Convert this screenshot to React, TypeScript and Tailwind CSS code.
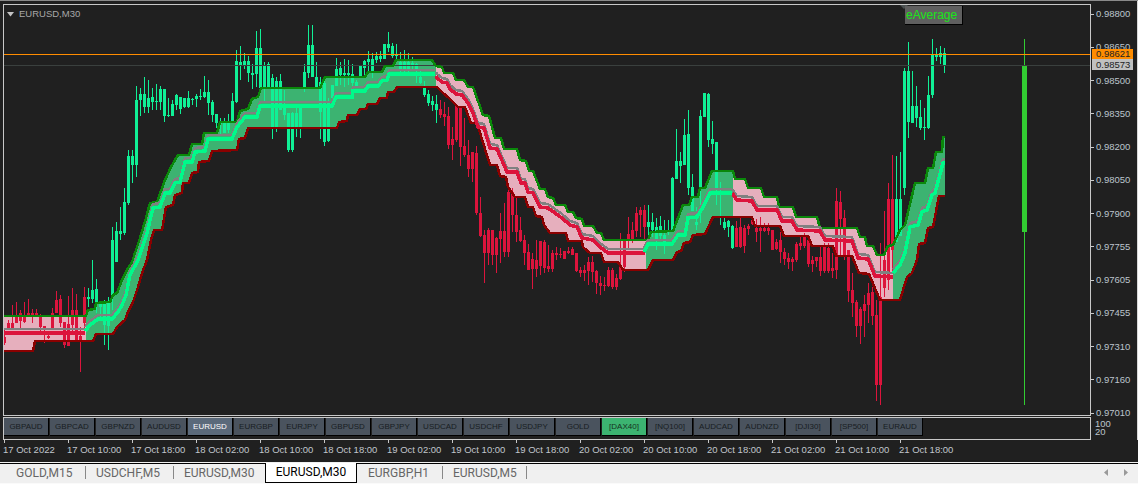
const BARS: number[][] = [
  [4,330,345,337,343],[8,320,330,323,328],[12,305,328,323,328],[16,302,323,317,323],[20,310,330,313,321],[24,302,323,317,322],[28,299,317,313,316],[32,309,323,313,317],[36,309,317,313,315],[40,314,331,317,327],
  [44,326,343,326,330],[48,335,339,336,338],[52,308,330,313,330],[56,291,313,300,313],[60,295,327,299,323],[64,322,348,322,345],[68,296,346,324,346],[72,288,335,310,325],[76,294,342,310,342],[80,327,372,336,342],
  [84,287,335,297,323],[88,288,307,297,299],[92,260,303,290,299],[96,279,313,289,302],[100,302,317,303,307],[104,300,345,303,325],[108,297,350,302,326],[112,227,310,240,295],[116,222,260,231,262],[120,207,240,231,234],
  [124,188,235,202,233],[128,150,205,156,203],[132,150,183,156,165],[136,86,177,100,165],[140,88,116,94,100],[144,77,113,94,107],[148,80,113,98,107],[152,88,110,97,102],[156,84,110,101,102],[160,86,110,89,102],
  [164,89,122,89,116],[168,98,117,115,116],[172,100,116,104,116],[176,94,110,95,105],[180,97,114,97,109],[184,98,108,98,107],[188,91,108,98,107],[192,98,105,99,100],[196,94,107,96,99],[200,89,100,96,97],
  [204,76,98,92,97],[208,80,115,92,103],[212,100,122,102,115],[216,115,128,114,123],[220,118,135,123,124],[224,118,132,123,133],[228,114,133,123,130],[232,93,122,101,122],[236,50,103,61,102],[240,46,80,62,66],
  [244,53,69,61,65],[248,56,82,61,73],[252,64,89,73,75],[256,31,87,48,74],[260,29,88,48,88],[264,62,102,65,88],[268,62,88,64,87],[272,74,139,78,128],[276,77,132,81,128],[280,74,103,81,110],
  [284,90,120,108,115],[288,113,152,113,150],[292,112,152,113,150],[296,107,137,113,127],[300,107,138,108,127],[304,64,92,72,88],[308,25,78,45,73],[312,25,77,45,77],[316,62,88,77,87],[320,77,139,82,112],
  [324,77,146,83,142],[328,98,142,102,141],[332,85,103,85,98],[336,58,85,69,86],[340,62,85,68,75],[344,59,87,73,75],[348,60,85,73,75],[352,64,88,74,83],[356,80,88,82,88],[360,65,76,66,76],
  [364,60,76,61,68],[368,51,72,59,62],[372,53,78,59,72],[376,52,63,56,60],[380,51,62,56,59],[384,44,59,44,59],[388,32,52,44,48],[392,43,58,46,56],[396,44,60,54,56],[400,52,72,62,70],
  [404,50,72,62,70],[408,53,72,62,70],[412,57,70,63,65],[416,63,83,64,71],[420,70,84,77,83],[424,81,97,88,95],[428,90,106,94,103],[432,96,111,101,105],[436,95,123,104,110],[440,100,118,109,115],
  [444,102,126,114,117],[448,107,149,116,145],[452,127,160,139,145],[456,105,142,106,140],[460,107,166,107,147],[464,118,157,146,155],[468,140,177,155,169],[472,152,182,152,169],[476,146,215,153,213],[480,197,237,213,236],
  [484,230,283,235,253],[488,228,265,230,253],[492,230,265,230,255],[496,237,273,238,255],[500,213,263,231,239],[504,203,257,231,252],[508,189,257,192,252],[512,188,232,192,215],[516,197,242,215,232],[520,217,242,230,241],
  [524,235,265,240,253],[528,244,270,252,270],[532,253,289,259,269],[536,240,277,260,269],[540,241,275,241,266],[544,240,273,242,268],[548,245,272,266,269],[552,250,272,253,269],[556,247,260,253,255],[560,248,258,254,255],
  [564,251,259,251,259],[568,247,254,251,253],[572,247,255,249,255],[576,253,272,253,271],[580,267,277,270,273],[584,265,281,270,273],[588,257,285,262,271],[592,256,282,262,272],[596,270,294,271,283],[600,276,295,283,286],
  [604,277,291,285,286],[608,267,287,270,286],[612,268,289,270,287],[616,274,290,278,287],[620,233,280,265,279],[624,240,272,241,267],[628,217,250,234,240],[632,222,243,230,239],[636,207,237,213,231],[640,207,237,210,215],
  [644,205,240,210,227],[648,205,235,222,227],[652,213,237,222,230],[656,218,250,227,240],[660,216,240,226,236],[664,220,254,235,243],[668,220,235,230,232],[672,177,230,178,230],[676,129,173,161,179],[680,152,183,161,166],
  [684,119,165,135,165],[688,110,195,134,188],[692,174,211,187,211],[696,207,230,222,225],[700,110,223,116,188],[704,93,117,93,117],[708,93,147,94,140],[712,121,154,139,144],[716,142,205,142,190],[720,182,225,188,190],
  [724,218,230,222,228],[728,220,237,221,227],[732,225,249,226,248],[736,221,247,228,247],[740,218,248,227,247],[744,225,253,228,246],[748,224,235,226,229],[752,220,225,220,224],[756,219,242,228,232],[760,217,252,228,231],
  [764,223,232,228,231],[768,223,235,228,231],[772,230,250,230,250],[776,239,250,242,249],[780,232,263,240,252],[784,248,265,252,259],[788,253,269,258,262],[792,257,271,259,262],[796,242,262,244,260],[800,235,250,243,246],
  [804,233,248,237,246],[808,240,267,240,264],[812,256,272,260,264],[816,257,267,257,261],[820,245,276,257,271],[824,243,273,245,271],[828,243,273,248,271],[832,253,278,268,271],[836,188,279,201,270],[840,191,255,202,219],
  [844,210,260,218,255],[848,250,302,250,291],[852,273,317,290,303],[856,300,337,302,326],[860,307,344,309,326],[864,295,337,304,311],[868,283,323,293,305],[872,287,325,292,316],[876,300,401,315,385],[880,243,405,297,385],
  [884,211,297,260,288],[888,183,290,199,280],[892,155,272,199,250],[896,156,227,199,242],[900,152,236,199,236],[904,68,195,71,188],[908,42,138,71,122],[912,71,123,106,123],[916,86,127,106,118],[920,100,130,117,128],
  [924,108,140,127,128],[928,76,129,95,128],[932,39,98,54,95],[936,48,61,54,57],[940,46,64,53,57],[944,48,73,53,66],
];

const UPPER = "4,316 86,316 88,310 95,309 96,303 110,302 113,295 117,293 122,280 127,270 132,262 136,250 140,238 146,218 150,203 157,202 165,180 171,167 178,155 189,155 192,144 202,144 204,133 217,133 220,122 237,122 240,111 248,109 252,99 258,97 261,88 320,88 325,77 365,77 368,72 382,72 385,66 393,66 396,60 432,60 436,66 442,67 444,73 453,73 456,80 464,80 468,87 473,87 483,115 489,116 495,138 501,138 504,149 517,149 520,160 526,161 529,171 533,171 540,189 545,189 548,197 553,198 556,205 565,205 568,212 573,212 576,218 582,219 584,226 593,226 597,233 601,233 604,240 648,240 651,232 673,231 683,205 689,205 692,197 698,197 700,188 705,188 712,171 733,171 735,179 745,179 748,188 761,188 764,197 777,197 779,207 793,207 796,217 817,217 820,228 857,228 860,237 865,237 867,246 873,246 877,255 884,255 888,246 893,245 900,230 905,225 915,183 925,183 928,168 933,168 936,152 942,152 943,137 945,137";
const LOWER = "4,351 33,351 35,341 93,341 96,334 113,334 117,327 125,320 128,312 133,302 138,287 142,273 147,260 151,240 154,230 162,230 166,207 173,205 175,195 182,193 183,183 189,183 192,173 198,172 199,162 209,161 212,151 237,150 239,139 245,138 248,128 337,128 339,122 347,121 348,115 357,115 360,109 366,109 368,104 377,104 380,98 387,98 388,92 394,92 397,87 437,87 442,92 450,99 458,107 465,107 471,123 477,123 490,165 497,165 500,176 506,177 508,187 515,197 525,197 528,207 533,207 536,216 542,217 544,225 550,233 566,233 568,241 582,241 583,247 590,253 601,253 604,262 618,262 623,270 648,270 653,260 673,260 677,252 681,251 684,243 690,242 693,235 705,234 713,217 752,217 755,226 780,226 784,236 808,236 812,246 833,246 836,256 852,256 859,273 869,274 880,300 900,300 907,277 912,273 917,260 919,244 925,243 928,228 933,227 939,196 945,196";

const MID_RED = [
  "4,333 85,333",
  "436,76 437,78 442,82 447,83 450,89 456,94 462,95 468,103 473,113 478,127 484,128 490,148 497,149 507,172 517,172 521,183 525,183 528,192 533,193 540,207 548,208 555,213 562,218 570,225 577,227 582,238 593,240 600,247 608,253 645,253",
  "732,193 737,200 752,201 757,210 777,210 782,221 792,221 797,230 820,231 825,240 852,241 858,258 868,259 875,276 893,277",
];
const MID_GREEN = [
  "85,331 90,325 98,319 112,319 118,312 122,305 126,295 130,275 138,260 147,233 150,220 153,208 160,207 165,193 170,193 175,183 180,182 185,162 192,162 195,152 205,151 208,139 232,139 237,127 245,117 257,117 260,106 332,106 336,97 352,97 353,91 365,91 368,86 378,86 382,81 387,80 389,74 435,74",
  "644,252 648,244 672,244 678,235 685,235 688,218 697,217 703,207 710,193 732,193",
  "893,273 900,265 905,253 910,227 918,225 922,212 927,210 932,195 935,193 943,163 945,163",
];

const FILL_POINTS = UPPER + " " + LOWER.split(" ").reverse().join(" ");

const barColor = (x: number) => {
  if (x <= 84) return "#dc143c";
  if (x <= 436) return "#10f096";
  if (x <= 644) return "#dc143c";
  if (x <= 732) return "#10f096";
  if (x <= 892) return "#dc143c";
  return "#10f096";
};

const PRICES = ["0.98800","0.98650","0.98500","0.98350","0.98200","0.98050","0.97900","0.97755","0.97605","0.97455","0.97310","0.97160","0.97010"];
const TIMES = ["17 Oct 2022","17 Oct 10:00","17 Oct 18:00","18 Oct 02:00","18 Oct 10:00","18 Oct 18:00","19 Oct 02:00","19 Oct 10:00","19 Oct 18:00","20 Oct 02:00","20 Oct 10:00","20 Oct 18:00","21 Oct 02:00","21 Oct 10:00","21 Oct 18:00"];
const SYMBOLS = ["GBPAUD","GBPCAD","GBPNZD","AUDUSD","EURUSD","EURGBP","EURJPY","GBPUSD","GBPJPY","USDCAD","USDCHF","USDJPY","GOLD","[DAX40]","[NQ100]","AUDCAD","AUDNZD","[DJI30]","[SP500]","EURAUD"];

function Chart() {
  return (
    <svg width="1086" height="410" viewBox="4 5 1086 410" shapeRendering="crispEdges" className="block">
      <defs>
        <clipPath id="pink">
          <rect x="4" y="0" width="82" height="420" />
          <rect x="436" y="0" width="210" height="420" />
          <rect x="733" y="0" width="160" height="420" />
        </clipPath>
        <clipPath id="green">
          <rect x="86" y="0" width="350" height="420" />
          <rect x="646" y="0" width="87" height="420" />
          <rect x="893" y="0" width="53" height="420" />
        </clipPath>
      </defs>

      <polygon points={FILL_POINTS} fill="#e6afbd" clipPath="url(#pink)" />
      <polygon points={FILL_POINTS} fill="#3cb371" clipPath="url(#green)" />

      {BARS.map(([x, high, low, top, bottom]) => (
        <g key={x} fill={barColor(x)}>
          <rect x={x} y={high} width="1" height={low - high} />
          <rect x={x - 1} y={top} width="3" height={Math.max(bottom - top, 1)} />
        </g>
      ))}

      <rect x="1022" y="65" width="5" height="167" fill="#32cd32" />
      <rect x="1024" y="39" width="1" height="366" fill="#32cd32" />

      <rect x="4" y="54" width="1086" height="1" fill="#ff8c00" />
      <rect x="4" y="65" width="1086" height="1" fill="#3a403e" />

      <polyline points={UPPER} fill="none" stroke="#0a880a" strokeWidth="2.5" />
      <polyline points={LOWER} fill="none" stroke="#8b0000" strokeWidth="2.5" />

      {[...MID_RED, ...MID_GREEN].map((points) => (
        <polyline key={points} points={points} fill="none" stroke="#808080" strokeWidth="2.5" transform="translate(0 -4)" />
      ))}
      {MID_RED.map((points) => (
        <polyline key={points} points={points} fill="none" stroke="#dc143c" strokeWidth="3.5" />
      ))}
      {MID_GREEN.map((points) => (
        <polyline key={points} points={points} fill="none" stroke="#00fa8a" strokeWidth="3.5" />
      ))}
    </svg>
  );
}

export default function App() {
  return (
    <div className="w-[1138px] h-[484px] flex flex-col overflow-hidden bg-[#202020] font-['Liberation_Sans',Arial,sans-serif]">
      <div className="h-[1px] bg-[#8a8a8a]" />

      {/* chart + price axis */}
      <div className="flex pt-[3px] pl-[3px] border-r border-[#d8d8d8]">
        <div className="w-[1088px] flex flex-col gap-[1px]">
          <div className="relative h-[412px] border border-[#c8c8c8]">
            <Chart />

            <div className="absolute left-[3px] top-[3px] flex items-center gap-[5px]">
              <svg width="7" height="5" viewBox="0 0 7 5"><polygon points="0,0 7,0 3.5,4.5" fill="#c4c4c4" /></svg>
              <span className="text-[9.5px] leading-3 text-[#a8a8a8]">EURUSD,M30</span>
            </div>

            <div className="absolute left-[896px] top-0 w-0 h-0 border-l-[4px] border-r-[4px] border-t-[4px] border-l-transparent border-r-transparent border-t-[#4a5050]" />
            <div className="absolute left-[901px] top-[1px] w-[58px] h-[19px] bg-[#5f5f5f] border-r border-b border-black pl-[1px] text-xs leading-[19px] text-[#19e619]">
              eAverage
            </div>
          </div>

          <div className="h-[23px] border border-[#c8c8c8] flex gap-[1px] items-start">
            {SYMBOLS.map((name) => (
              <div
                key={name}
                className={
                  name === "EURUSD"
                    ? "w-[45px] h-[18px] shrink-0 flex items-center justify-center bg-[#5b6a7b] border-r border-b border-black text-[8px] text-white"
                    : name === "[DAX40]"
                    ? "w-[45px] h-[18px] shrink-0 flex items-center justify-center bg-[#3cb371] border-r border-b border-black text-[8px] text-[#16301f]"
                    : "w-[45px] h-[18px] shrink-0 flex items-center justify-center bg-[#4a535e] border-r border-b border-black text-[8px] text-[#181d22]"
                }
              >
                {name}
              </div>
            ))}
          </div>
        </div>

        <div className="relative flex-1 flex flex-col">
          <div className="h-[416px] -mt-[1px] pt-[5px] flex flex-col justify-between">
            {PRICES.map((price) => (
              <div key={price} className="h-3 flex items-center">
                <span className="w-[3px] h-[1px] bg-[#c8c8c8]" />
                <span className="ml-[2px] text-[9.5px] leading-3 text-[#bcc4cc]">{price}</span>
              </div>
            ))}
          </div>
          <div className="ml-[4px] mt-[1px] text-[9.5px] leading-[8px] text-[#bcc4cc]">
            <div>100</div>
            <div>20</div>
          </div>

          <div className="absolute left-[1px] top-[45px] w-[41px] h-[10px] bg-[#ff8c00] pl-[4px] text-[9.5px] leading-[10px] text-[#222]">0.98621</div>
          <div className="absolute left-[1px] top-[55px] w-[41px] h-[11px] bg-[#c0c0c0] pl-[4px] text-[9.5px] leading-[11px] text-[#222]">0.98573</div>
        </div>
      </div>

      {/* time axis */}
      <div className="h-[21px] flex pl-[4px]">
        {TIMES.map((time) => (
          <div key={time} className="w-[64px] shrink-0 flex flex-col">
            <span className="w-[1px] h-[3px] bg-[#c8c8c8]" />
            <span className="-ml-[1px] mt-[1px] text-[9.5px] leading-3 text-[#c0c6cc] whitespace-nowrap">{time}</span>
          </div>
        ))}
      </div>

      {/* tab bar */}
      <div className="flex-1 bg-[#f0f0f0] mt-[1px] border-b border-[#fafafa] font-['Roboto',sans-serif] text-[12px] text-[#666]">
        <div className="h-[20px] mt-[1px] pb-[2px] border-t border-black flex items-center pr-[5px]">
          <div className="w-[85px] pl-[16px]">GOLD,M15</div>
          <span className="w-[1px] h-[13px] bg-[#888]" />
          <div className="w-[87px] pl-[10px]">USDCHF,M5</div>
          <span className="w-[1px] h-[13px] bg-[#888]" />
          <div className="w-[91px] pl-[10px]">EURUSD,M30</div>
          <div className="w-[92px] h-[20px] -mt-[1px] self-start bg-white border-x border-b border-black text-center leading-[18px] text-black">EURUSD,M30</div>
          <div className="w-[85px] pl-[11px]">EURGBP,H1</div>
          <span className="w-[1px] h-[13px] bg-[#888]" />
          <div className="w-[83px] pl-[10px]">EURUSD,M5</div>
          <span className="w-[1px] h-[13px] bg-[#888]" />
          <div className="ml-auto flex gap-[16px] pr-[5px]">
            <svg width="4" height="7" viewBox="0 0 4 7"><polygon points="4,0 4,7 0,3.5" fill="#9a9a9a" /></svg>
            <svg width="4" height="7" viewBox="0 0 4 7"><polygon points="0,0 0,7 4,3.5" fill="#9a9a9a" /></svg>
          </div>
        </div>
      </div>
    </div>
  );
}
